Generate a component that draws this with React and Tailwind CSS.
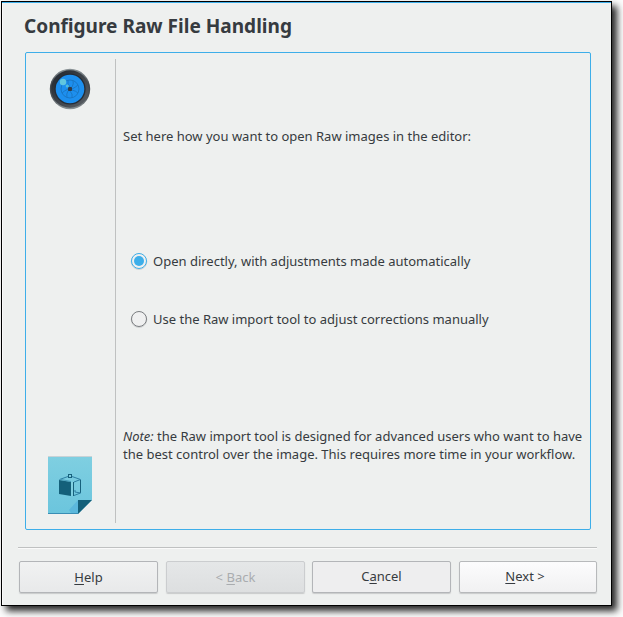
import React from "react";

function LensIcon() {
  return (
    <svg width="42" height="42" viewBox="0 0 42 42" className="block">
      <defs>
        <linearGradient id="rim" x1="0" y1="0" x2="1" y2="1">
          <stop offset="0.2" stopColor="#2a3038" />
          <stop offset="1" stopColor="#5c6166" />
        </linearGradient>
        <linearGradient id="edge" x1="0" y1="0" x2="0" y2="1">
          <stop offset="0" stopColor="#8b9497" />
          <stop offset="0.4" stopColor="#3d444b" />
          <stop offset="0.7" stopColor="#4f555a" />
          <stop offset="1" stopColor="#8b9497" />
        </linearGradient>
      </defs>
      <circle cx="21" cy="21" r="20.2" fill="url(#edge)" />
      <circle cx="21" cy="21" r="18.8" fill="url(#rim)" />
      <circle cx="21" cy="21" r="15.6" fill="#252c35" />
      <circle cx="21" cy="21" r="14.3" fill="#1d8fee" />
      <g fill="none" stroke="#1975c2" strokeWidth="0.9">
        <circle cx="21" cy="21" r="9" />
        <path d="M21 19Q18 16 19 12.5M23 19Q25 16 24 12.5M23 21Q27 19 29 17M23 22Q27 23 29 25M21 23Q24 26 23 29.5M19 23Q17 26 18 29.5M19 21Q15 23 13 25" />
      </g>
      <rect x="19" y="19" width="4" height="4" rx=".8" fill="#303b49" />
      <circle cx="14" cy="14" r="3.2" fill="#61c6df" />
      <circle cx="18.3" cy="18" r="1.6" fill="#50bada" />
    </svg>
  );
}

function PageIcon() {
  return (
    <svg width="44" height="58" viewBox="0 0 44 58" className="block">
      <defs>
        <linearGradient id="sheet" x1="0" y1="0" x2="0" y2="1">
          <stop offset="0" stopColor="#7fcfe1" />
          <stop offset="1" stopColor="#6bc5dd" />
        </linearGradient>
      </defs>
      <path d="M0 0H44V44L30 58H0Z" fill="url(#sheet)" />
      <path d="M0 .5H44" stroke="#c8d2d6" />
      <path d="M0 57.5H30" stroke="#398db4" />
      <path d="M21 54L30 44V57H23Z" fill="#5bb8dc" />
      <path d="M30 44H44L30 58Z" fill="#14607a" />
      <path d="M11 24L23 26V40L11 38Z" fill="#14607a" />
      <path d="M25.5 26V40M32.5 24V37" fill="none" stroke="#17617c" />
      <path d="M11.5 23.5L20 20.5M24 20.5L32.5 23.5L26 26M27 36L32.5 37L26 39.5M27 34V36" fill="none" stroke="#2d7fa3" />
      <path d="M24 26V40" stroke="#8cd6e5" />
      <path d="M13 23.5L23 25.5" stroke="#398fae" strokeWidth=".8" />
      <rect x="20.5" y="18.5" width="3" height="3" fill="#7fcfe1" stroke="#17617c" />
    </svg>
  );
}

function Radio({ checked, children }) {
  return (
    <label className="flex h-[18px] items-center gap-[5px]">
      <input type="radio" name="raw" defaultChecked={checked} className="peer sr-only" />
      <svg width="18" height="18" viewBox="0 0 18 18" className="shrink-0">
        <circle cx="9" cy="9.7" r="7.8" fill="none" stroke="#d0d2d2" />
        <circle cx="9" cy="9" r="7.5" fill="#eff0f0" stroke={checked ? "#3daee9" : "#7b7e81"} />
        {checked && <circle cx="9" cy="9" r="5" fill="#3daee9" />}
      </svg>
      <span>{children}</span>
    </label>
  );
}

export default function App() {
  const button = "h-8 rounded-[2px] border shadow-[0_1px_1px_#c8caca] outline-none";
  return (
    <main className="h-[617px] w-[623px] overflow-hidden bg-[#fdfdfd] pl-px pt-px font-['Noto_Sans',sans-serif] text-[13px] leading-[18px] text-[#363b40]">
      <section className="flex h-[605px] w-[611px] flex-col border border-black bg-[#eef0ef] shadow-[5px_5px_7px_#000000d9]">
        <div className="h-px shrink-0 bg-[#3daee9]" />
        <div className="flex min-h-0 grow flex-col border-l border-[#fafafa] pl-[15px] pr-[14px]">
          <h1 className="ml-[6px] mt-[9px] h-7 text-[19.06px] font-bold leading-7">Configure Raw File Handling</h1>
          <div className="ml-[7px] mt-[12px] flex h-[478px] w-[566px] shrink-0 rounded-[2px] border border-[#3daee9] py-1.5">
            <aside className="flex w-[90px] shrink-0 flex-col items-center justify-between border-r border-[#bfc1c1] pb-[9px] pr-px pt-[9px]">
              <LensIcon />
              <PageIcon />
            </aside>
            <div className="flex min-w-0 grow flex-col whitespace-nowrap pl-[7px] pt-[68px]">
              <p>Set here how you want to open Raw images in the editor:</p>
              <div className="ml-[7px] mt-[107px] flex flex-col gap-10">
                <Radio checked>Open directly, with adjustments made automatically</Radio>
                <Radio>Use the Raw import tool to adjust corrections manually</Radio>
              </div>
              <p className="mt-[99px]"><em>Note:</em> the Raw import tool is designed for advanced users who want to have<br />the best control over the image. This requires more time in your workflow.</p>
            </div>
          </div>
          <div className="mt-[17px] h-[2px] w-[579px] shrink-0 border-t border-[#bfc1c1] bg-[#fafafa]" />
          <div className="ml-px mt-3 flex">
            <button className={`${button} mr-2 w-[139px] border-[#b3b5b8] bg-linear-to-b from-[#f1f2f2] to-[#e8e9ea]`}><u className="underline-offset-2">H</u>elp</button>
            <button disabled className={`${button} mr-[7px] w-[139px] border-[#cbcdcf] bg-linear-to-b from-[#e5e7e8] to-[#dddfe0] text-[#a9acaf]`}>&lt; <u className="underline-offset-2">B</u>ack</button>
            <button className={`${button} mr-2 w-[139px] border-[#b3b5b8] bg-[#eeeeef] pb-0.5`}>C<u className="underline-offset-2">a</u>ncel</button>
            <button className={`${button} w-[138px] border-[#b7b9bb] bg-linear-to-b from-[#fcfcfd] to-[#f1f1f2] pb-0.5 pr-1.5`}><u className="underline-offset-2">N</u>ext &gt;</button>
          </div>
        </div>
      </section>
    </main>
  );
}
